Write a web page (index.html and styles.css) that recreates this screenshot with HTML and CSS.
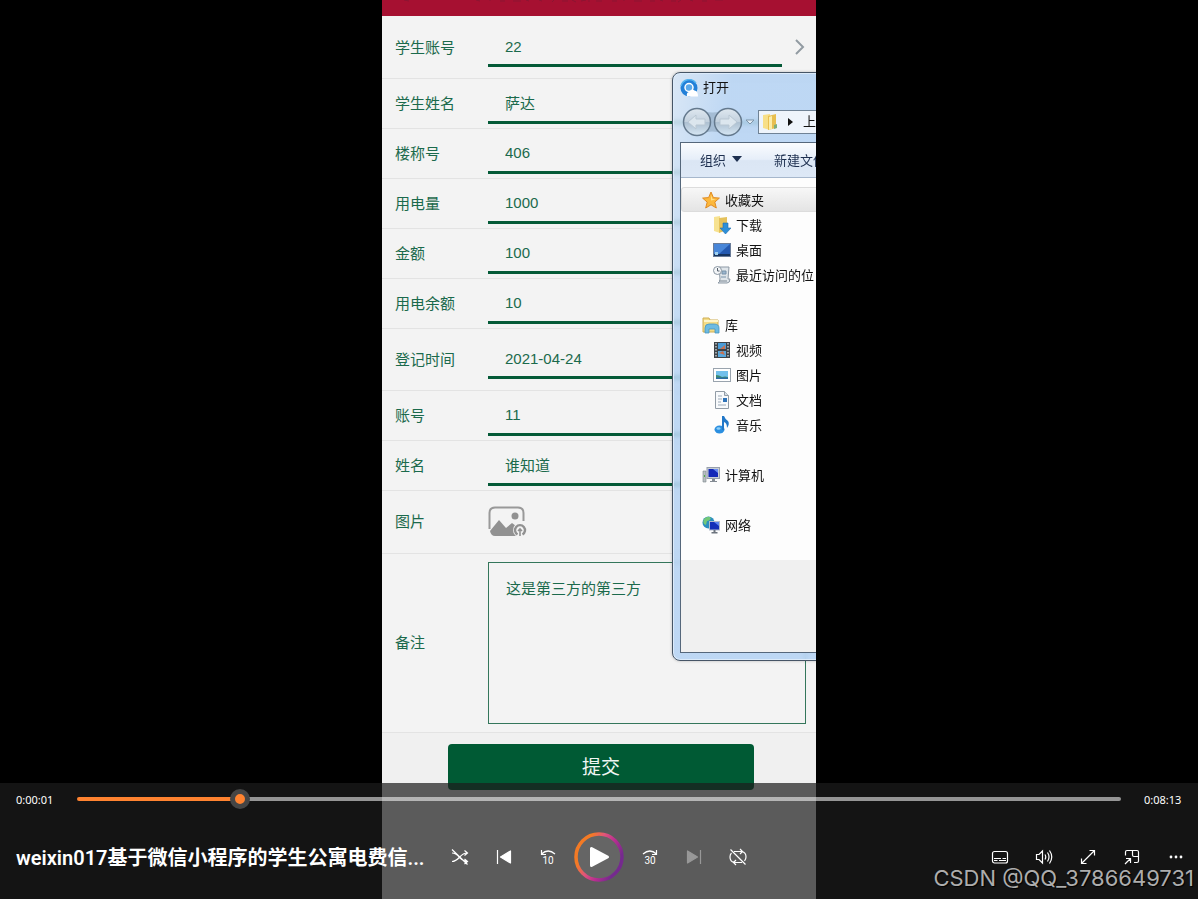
FILE: index.html
```html
<!DOCTYPE html>
<html lang="zh-CN">
<head>
<meta charset="utf-8">
<meta name="viewport" content="width=device-width, initial-scale=1">
<title>视频播放器</title>
<link rel="stylesheet" href="styles.css">
</head>
<body>
<main class="player">
  <section class="video">
    <header class="app-bar">
      <svg class="app-bar-marks" viewBox="0 0 434 16" aria-hidden="true"><path d="M22 0l5 1M94 0l4 1M108 0v1M118 1h5M131 1h8M144 0l3 1M157 0l3 1M172 0l-2 2M180 1h6M190 0l4 2M199 1l5-1M207 0v2M214 1h6M230 1h5M242 0v1M252 1h8M268 1h5M278 0l3 1M289 1h5M299 0l-3 2M308 0l3 1M320 1h5M333 0h8"/></svg>
    </header>
    <form class="form">
      <div class="row row-tall">
        <label for="sid">学生账号</label>
        <input id="sid" class="field" type="text" value="22">
        <button type="button" class="pick" aria-label="选择学生账号"><svg viewBox="0 0 12 18" width="12" height="18"><path d="M2 2l7 7-7 7"/></svg></button>
      </div>
      <div class="row"><label for="sname">学生姓名</label><input id="sname" class="field" type="text" value="萨达"></div>
      <div class="row"><label for="room">楼称号</label><input id="room" class="field" type="text" value="406"></div>
      <div class="row"><label for="usage">用电量</label><input id="usage" class="field" type="text" value="1000"></div>
      <div class="row"><label for="amount">金额</label><input id="amount" class="field" type="text" value="100"></div>
      <div class="row"><label for="rest">用电余额</label><input id="rest" class="field" type="text" value="10"></div>
      <div class="row row-tall"><label for="date">登记时间</label><input id="date" class="field" type="text" value="2021-04-24"></div>
      <div class="row"><label for="acct">账号</label><input id="acct" class="field" type="text" value="11"></div>
      <div class="row"><label for="name">姓名</label><input id="name" class="field" type="text" value="谁知道"></div>
      <div class="row row-image">
        <label for="upload">图片</label>
        <button type="button" id="upload" class="upload" aria-label="上传图片">
          <svg viewBox="0 0 39 32" width="39" height="32">
            <path d="M1.500 23V7Q1.500 1.500 7 1.500H30Q35.500 1.500 35.500 7V15" fill="none" stroke="#999" stroke-width="2"/>
            <path d="M2 25L11 14l7 8 6-5 4 3q-4 5 0 10H7q-4 0-5-5z" fill="#919191"/>
            <circle cx="27" cy="10" r="3.500" fill="#919191"/>
            <circle cx="32" cy="24" r="7" fill="#f3f3f3"/>
            <path d="M29.500 28.500a5 5 0 1 1 5 0" fill="none" stroke="#919191" stroke-width="2.400"/>
            <path d="M32 30v-7M30 25l2-2 2 2" fill="none" stroke="#919191" stroke-width="1.600"/>
          </svg>
        </button>
      </div>
      <div class="row row-memo"><label for="memo">备注</label><textarea id="memo" class="memo">这是第三方的第三方</textarea></div>
      <div class="actions"><button type="submit" class="submit">提交</button></div>
    </form>

    <section class="dialog" aria-label="打开">
      <div class="dialog-title">
        <svg viewBox="0 0 18 18" width="18" height="18"><circle cx="9" cy="9" r="8.500" fill="#2280d8"/><path d="M1 7a8.500 8.500 0 0 1 15-3" fill="none" stroke="#55b4f0" stroke-width="1.500"/><circle cx="9" cy="8.500" r="4" fill="#5aa9ea" stroke="#fff" stroke-width="1.500"/><path d="M7 17.500q-1-4.500 2.500-4.500 2-4 5-1.500 3.500.5 3.500 6z" fill="#fff"/></svg>
        <span>打开</span>
      </div>
      <div class="dialog-nav">
        <svg viewBox="0 0 74 30" width="74" height="30">
          <defs><linearGradient id="orb" x1="0" y1="0" x2="0" y2="1"><stop offset="0" stop-color="#dfe8f0"/><stop offset=".48" stop-color="#c3d1de"/><stop offset=".52" stop-color="#adc0d1"/><stop offset="1" stop-color="#d7e7f4"/></linearGradient></defs>
          <path d="M17 3q15 5 31 0v24q-16-5-31 0z" fill="#a4bcd4"/>
          <circle cx="17" cy="15" r="13.500" fill="url(#orb)" stroke="#64798d" stroke-width="1.500"/>
          <circle cx="48" cy="15" r="13.500" fill="url(#orb)" stroke="#64798d" stroke-width="1.500"/>
          <path d="M8 15l8-7v4h9v6h-9v4z" fill="#dce6ee" stroke="#b9c7d3"/>
          <path d="M57 15l-8-7v4h-9v6h9v4z" fill="#dce6ee" stroke="#b9c7d3"/>
          <path d="M66 13h8l-4 4z" fill="#e2edf7" stroke="#7f95aa"/>
        </svg>
        <div class="address">
          <svg viewBox="0 0 16 18" width="16" height="18"><path d="M1 2l7-1v16l-7-2z" fill="#f7df87"/><path d="M6 3l8-2v14l-8 2z" fill="#e8bf50"/><path d="M7 4l3-1v13l-3 1z" fill="#fbedaa"/><path d="M12 12l3-1v4l-3 1z" fill="#7fae7a"/></svg>
          <svg class="address-arrow" viewBox="0 0 5 8" width="5" height="8"><path d="M0 0l5 4-5 4z" fill="#111"/></svg>
          <span>上</span>
        </div>
      </div>
      <div class="dialog-body">
        <div class="toolbar">
          <button type="button" class="tool">组织<svg viewBox="0 0 10 6" width="10" height="6"><path d="M0 0h10L5 6z" fill="#1e3050"/></svg></button>
          <button type="button" class="tool">新建文件夹</button>
        </div>
        <nav class="tree">
          <ul>
            <li class="head current"><svg viewBox="0 0 18 18" width="18" height="18"><path d="M9 1l2.400 5.600 6 .5-4.600 4 1.500 5.900L9 13.800 3.700 17l1.500-5.900-4.600-4 6-.5z" fill="#fcb83c" stroke="#e08a22"/><path d="M9 4l1.500 4 3.500.5-5 1z" fill="#ffe08a"/></svg>收藏夹</li>
            <li><svg viewBox="0 0 18 18" width="18" height="18"><path d="M1 1l6-1v17l-6-2z" fill="#f7e290"/><path d="M6 2l8-1v13l-8 3z" fill="#e5c25c"/><path d="M10 7h5v5h3l-5.500 6L7 12h3z" fill="#2d8fd8" stroke="#1f6db0" stroke-width=".6"/></svg>下载</li>
            <li><svg viewBox="0 0 18 18" width="18" height="18"><rect x=".5" y="2.500" width="17" height="13" fill="#2459b0" stroke="#6a7c98"/><path d="M1 3h16L6 13H1z" fill="#4886d8"/><path d="M1 13h16v2H1z" fill="#16345f"/><path d="M2 11h3v3H2z" fill="#9fd0ee"/></svg>桌面</li>
            <li><svg viewBox="0 0 18 18" width="18" height="18"><path d="M6 1h10l-1 12h2q0 4-3 4H5q2-1 2-4z" fill="#dfe5ea" stroke="#8d99a5"/><path d="M9 5h4v3H9zM8 11h5" fill="#9bb6cf" stroke="#7892a8"/><circle cx="4.500" cy="4.500" r="4" fill="#f3f5f7" stroke="#8a96a2"/><path d="M4.500 2v3h2" fill="none" stroke="#56616c"/><path d="M6 15h8" stroke="#7f8a95"/></svg>最近访问的位</li>
          </ul>
          <ul>
            <li class="head"><svg viewBox="0 0 18 18" width="18" height="18"><path d="M1 2h6l1 2h8v12H1z" fill="#f4dc86" stroke="#cfae55"/><path d="M2 5h14" stroke="#fff5c8" stroke-width="2"/><path d="M3 17V12q0-4 4-4h5q5 0 5 4v5h-4v-4H7v4z" fill="#6dbbe2" stroke="#4796c0" stroke-width=".8"/></svg>库</li>
            <li><svg viewBox="0 0 18 18" width="18" height="18"><rect x="1" y="1" width="16" height="16" fill="#3d4348"/><rect x="5" y="2" width="8" height="6" fill="#4a9bd6"/><rect x="5" y="10" width="8" height="6" fill="#58a8de"/><path d="M7 8l5-4v4zM6 12l4-2 2 4z" fill="#c87050"/><path d="M3 2v14M15 2v14" stroke="#c2c8cb" stroke-width="1.500" stroke-dasharray="1.500 1.500"/></svg>视频</li>
            <li><svg viewBox="0 0 18 18" width="18" height="18"><rect x=".5" y="2.500" width="17" height="13" fill="#fff" stroke="#9aa4ae"/><path d="M3 5h12v8H3z" fill="#72c0ec"/><path d="M3 9q3 0 6 2 3-1 6 0v2H3z" fill="#3c8b70"/><path d="M3 11.500h12V13H3z" fill="#2b6ca8"/></svg>图片</li>
            <li><svg viewBox="0 0 18 18" width="18" height="18"><path d="M2.500.5h9l4 4v13h-13z" fill="#f8fafc" stroke="#929ca6"/><path d="M11.500.5v4h4" fill="#d6dde4" stroke="#929ca6"/><path d="M5 5h4M5 8h4M5 11h3M5 14h8" stroke="#9daab8"/><path d="M10 7h4v4h-4z" fill="#2f73b8"/></svg>文档</li>
            <li><svg viewBox="0 0 18 18" width="18" height="18"><ellipse cx="6.500" cy="13.500" rx="5" ry="4" fill="#2b8fe0"/><path d="M9 14V0h2q1 3 4 5 2 3-1 7 0-5-3-6v8z" fill="#2177c8"/><ellipse cx="5.500" cy="12.500" rx="2" ry="1.300" fill="#8fd0f8"/></svg>音乐</li>
          </ul>
          <ul>
            <li class="head"><svg viewBox="0 0 18 18" width="18" height="18"><path d="M1 5h3v11H1z" fill="#b8bec2" stroke="#7e868c" stroke-width=".6"/><path d="M2 9h1v2H2z" fill="#4eb04a"/><rect x="5" y="1.500" width="12.500" height="11" fill="#c8ced6" stroke="#98a0ac"/><rect x="6.500" y="3" width="9.500" height="8" fill="#1428b8"/><path d="M11 3h5v4z" fill="#6a8cf0"/><path d="M10 13h3v2h2v1H8v-1h2z" fill="#858c94"/></svg>计算机</li>
          </ul>
          <ul>
            <li class="head"><svg viewBox="0 0 18 18" width="18" height="18"><circle cx="6.500" cy="6.500" r="6" fill="#2b8fc0"/><path d="M2 3q4-4 7-1-1 3-4 3l-1 4q-4-1-2-6z" fill="#72c878"/><rect x="7.500" y="5.500" width="10" height="8.500" fill="#1530b8" stroke="#b4bccc"/><path d="M12 6h5v4z" fill="#5f86f0"/><path d="M11.500 14h2v2h2v1.500h-6V16h2z" fill="#6c747e"/></svg>网络</li>
          </ul>
        </nav>
      </div>
    </section>
  </section>

  <section class="controls">
    <div class="timeline">
      <time>0:00:01</time>
      <input class="seek" type="range" min="0" max="1000" value="149" aria-label="播放进度">
      <time>0:08:13</time>
    </div>
    <div class="bar">
      <h1 class="title">weixin017基于微信小程序的学生公寓电费信...</h1>
      <div class="group">
        <button type="button" class="icon" aria-label="随机播放"><svg viewBox="0 0 18 18"><path d="M1 5c7 0 8 8.500 15 8.500M1 13.500c7 0 8-8.500 15-8.500M13.500 2.500L16.500 5l-3 2.500M13.500 11l3 2.500-3 2.500M1 1.500l15.500 15"/></svg></button>
        <button type="button" class="icon" aria-label="上一个"><svg viewBox="0 0 18 18"><path d="M2.500 2v14"/><path class="solid" d="M15.500 3v12L5.500 9z"/></svg></button>
        <button type="button" class="icon" aria-label="后退 10 秒"><svg viewBox="0 0 18 18"><path d="M2.500 2v4.500H7M2.500 6q6.500-6 13.500 0"/><text x="9" y="16">10</text></svg></button>
        <button type="button" class="icon play" aria-label="播放"><svg viewBox="0 0 50 50"><defs><linearGradient id="ring" x1="0" y1=".2" x2="1" y2=".7"><stop offset=".2" stop-color="#f37a25"/><stop offset=".42" stop-color="#e0557a"/><stop offset=".65" stop-color="#b82d91"/><stop offset=".9" stop-color="#752a8e"/></linearGradient></defs><circle cx="25" cy="25" r="23" fill="#656565" stroke="url(#ring)" stroke-width="3.500"/><path d="M17.500 16.500v17l16-8.500z" fill="#fff" stroke="#fff" stroke-width="3" stroke-linejoin="round"/></svg></button>
        <button type="button" class="icon" aria-label="前进 30 秒"><svg viewBox="0 0 18 18"><path d="M15.500 2v4.500H11M15.500 6Q9 0 2 6"/><text x="9" y="16">30</text></svg></button>
        <button type="button" class="icon" aria-label="下一个" disabled><svg viewBox="0 0 18 18"><path d="M15.500 2v14"/><path class="solid" d="M2.500 3v12l10-6z"/></svg></button>
        <button type="button" class="icon" aria-label="关闭重复播放"><svg viewBox="0 0 18 18"><path d="M5 3.500h8q4 1 4 5.500 0 2-1.500 4M11 1l2.500 2.500L11 6M13 14.500H5Q1 13.500 1 9q0-2.500 1.500-4M7 12l-2.500 2.500L7 17M1.500 1.500l15 15"/></svg></button>
      </div>
      <div class="group group-end">
        <button type="button" class="icon" aria-label="字幕"><svg viewBox="0 0 18 18"><rect x="1.500" y="3.500" width="15" height="11.500" rx="2"/><path d="M3 10.500h7M11.500 10.500H15M3 12.500h3.500M8 12.500h7"/></svg></button>
        <button type="button" class="icon" aria-label="音量"><svg viewBox="0 0 18 18"><path d="M1.500 6.500H4L7.500 3v12L4 11.500H1.500zM10 6.500q1.500 2.500 0 5M12.500 4.500q3 4.500 0 9M14.500 2.500q4.500 6.500 0 13"/></svg></button>
        <button type="button" class="icon" aria-label="全屏"><svg viewBox="0 0 18 18"><path d="M2.500 15.500l13-13M10.500 2.500h5v5M2.500 10.500v5h5"/></svg></button>
        <button type="button" class="icon" aria-label="迷你播放器"><svg viewBox="0 0 18 18"><path d="M2.500 7.500V4q0-1.500 1.500-1.500h10q1.500 0 1.500 1.500v9q0 1.500-1.500 1.500h-3M9.500 2.500V7q0 1.500 1.500 1.500h4.500M2 16l5.500-5.500M3 10.500h4.500V15"/></svg></button>
        <button type="button" class="icon" aria-label="更多"><svg viewBox="0 0 18 18"><g class="solid"><circle cx="4" cy="9" r=".8"/><circle cx="9" cy="9" r=".8"/><circle cx="14" cy="9" r=".8"/></g></svg></button>
      </div>
    </div>
  </section>
  <p class="watermark">CSDN @QQ_3786649731</p>
</main>
</body>
</html>
```
FILE: styles.css
```css
* { box-sizing: border-box; }
body {
  margin: 0;
  background: #000;
  font-family: "Liberation Sans", "Noto Sans CJK SC", sans-serif;
}
button, input, textarea { font: inherit; color: inherit; }
button { padding: 0; border: 0; background: none; }
svg { display: block; flex: none; }

.player { position: relative; min-height: 100vh; display: flex; justify-content: center; }

/* video picture */
.video {
  position: relative;
  overflow: hidden;
  height: 100vh;
  aspect-ratio: 434 / 899;
  background: #f3f3f3;
}
.app-bar { height: 16px; background: #a61031; }
.app-bar-marks { width: 100%; fill: none; stroke: #8b1532; stroke-width: 1; }

.form { color: #1b6a4c; font-size: 15px; }
.row {
  display: grid;
  grid-template-columns: 93px 1fr auto;
  align-items: center;
  height: 50px;
  padding: 5px 10px 4px 13px;
  border-top: 1px solid #e3e3e3;
}
.row:first-child { border-top-color: #f3f3f3; }
.row label { padding-bottom: 3px; }
.row-tall { height: 62px; padding-top: 12px; padding-bottom: 11px; }
.row-image { height: 63px; padding-top: 0; padding-bottom: 0; }
.row-memo { height: 179px; padding-top: 8px; padding-bottom: 8px; }
.field {
  width: 100%;
  min-width: 0;
  height: 40px;
  padding: 0 17px;
  border: 0;
  border-bottom: 3px solid #045a37;
  background: none;
  outline: 0;
}
.row-tall .field { height: 38px; }
.pick { padding: 0 0 2px 12px; }
.pick path { fill: none; stroke: #929ba2; stroke-width: 2; }
.memo {
  display: block;
  width: 100%;
  height: 162px;
  padding: 15px 17px;
  border: 1px solid #34765b;
  background: none;
  resize: none;
  line-height: 22px;
}
.upload { justify-self: start; }
.actions { padding: 11px 62px 11px 66px; border-top: 1px solid #e3e3e3; background: #f0f0f0; }
.submit {
  width: 100%;
  height: 46px;
  padding-bottom: 3px;
  border-radius: 4px;
  background: #005a34;
  color: #f0f6f3;
  font-size: 19px;
}

/* file dialog floating over the form */
.dialog {
  position: absolute;
  top: 72px;
  left: 290px;
  width: 560px;
  height: 589px;
  display: flex;
  flex-direction: column;
  padding: 0 7px 7px;
  border: 1px solid #465566;
  border-radius: 8px;
  background: linear-gradient(100deg, rgba(212, 228, 245, .85) 0, rgba(180, 210, 243, .85) 60px, rgba(174, 208, 244, .85));
  backdrop-filter: blur(2px);
  box-shadow: inset 0 0 0 1px #dcebfa, 0 0 3px rgba(0, 0, 0, .25);
  color: #111;
  font-size: 13px;
}
.dialog-title { display: flex; align-items: center; gap: 5px; height: 30px; }
.dialog-title span { padding-bottom: 3px; }
.dialog-nav { display: flex; align-items: center; gap: 4px; height: 39px; padding-bottom: 2px; }
.address {
  flex: 1;
  display: flex;
  align-items: center;
  height: 24px;
  padding-left: 3px;
  border: 1px solid #6f8295;
  background: #eef4fb;
}
.address span { padding-bottom: 2px; }
.address-arrow { margin: 0 10px; }
.dialog-body {
  flex: 1;
  display: flex;
  flex-direction: column;
  border: 1px solid #55677b;
  background: #f0f0f0;
}
.toolbar {
  display: flex;
  align-items: center;
  gap: 32px;
  height: 35px;
  padding: 0 0 2px 19px;
  border-bottom: 1px solid #a6b7cc;
  background: linear-gradient(#fafcfe, #e6eef9 48%, #dbe6f4 52%, #dde8f6);
  color: #1e3050;
}
.tool { display: flex; align-items: center; gap: 6px; white-space: nowrap; }
.tree {
  display: flex;
  flex-direction: column;
  gap: 25px;
  padding: 9px 0 23px;
  background: #fdfdfd;
}
.tree ul { margin: 0; padding: 0; list-style: none; }
.tree li { display: flex; align-items: center; gap: 5px; height: 25px; padding-left: 32px; }
.tree .head { padding-left: 21px; }
.tree .current {
  border: 1px solid #dcdcdc;
  border-radius: 3px;
  padding-left: 20px;
  background: linear-gradient(#f7f7f7, #e4e4e4);
}

/* playback controls */
.controls {
  position: absolute;
  inset: auto 0 0;
  background: rgba(28, 28, 28, .71);
  color: #fff;
}
.timeline { display: flex; align-items: center; justify-content: space-between; height: 32px; padding: 0 16px; }
.timeline time { width: 38px; font: 11px "Noto Sans", sans-serif; }
.seek {
  flex: 1;
  height: 20px;
  margin: 0 23px;
  appearance: none;
  background: none;
}
.seek::-webkit-slider-runnable-track {
  height: 4px;
  border-radius: 2px;
  background: linear-gradient(90deg, #ff8330 15.6%, rgba(255, 255, 255, .55) 15.6%);
}
.seek::-webkit-slider-thumb {
  appearance: none;
  width: 20px;
  height: 20px;
  margin-top: -8px;
  border: 5px solid #454545;
  border-radius: 50%;
  background: #ff8330;
}
.bar { display: grid; grid-template-columns: 1fr auto 1fr; align-items: center; height: 84px; }
.title {
  margin: 0;
  padding: 0 0 2px 16px;
  white-space: nowrap;
  font: 600 20px Roboto, "Noto Sans CJK SC", sans-serif;
}
.group { display: flex; align-items: center; }
.group-end { justify-content: flex-end; }
.icon { display: flex; justify-content: center; width: 44px; color: #fff; }
.icon svg { width: 18px; height: 18px; fill: none; stroke: currentColor; stroke-width: 1.2; }
.icon .solid { fill: currentColor; stroke-linejoin: round; }
.icon text { fill: currentColor; stroke: none; font: 10px Roboto, sans-serif; text-anchor: middle; }
.icon:disabled { color: #989898; }
.play { width: 58px; }
.play svg { width: 50px; height: 50px; }
.watermark {
  position: absolute;
  right: 4px;
  bottom: 4px;
  margin: 0;
  color: #adadad;
  font: 400 22px/34px Inter, sans-serif;
  text-shadow: 1px 1px 1px #000;
}
```
